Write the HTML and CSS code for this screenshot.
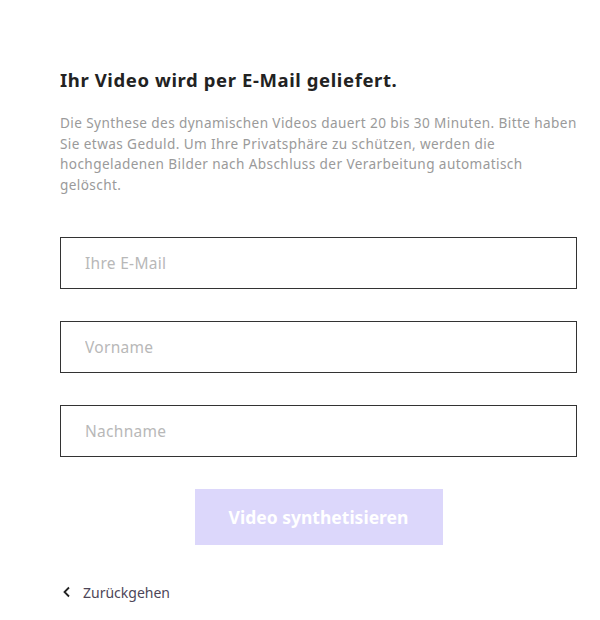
FILE: index.html
```html
<!DOCTYPE html>
<html lang="de">
<head>
    <meta charset="UTF-8">
    <meta name="viewport" content="width=device-width, initial-scale=1.0">
    <title>Video synthetisieren</title>
    <link rel="stylesheet" href="styles.css">
</head>
<body>
    <main class="panel">
        <h1 class="title">Ihr Video wird per E-Mail geliefert.</h1>
        <p class="intro">Die Synthese des dynamischen Videos dauert 20 bis 30 Minuten. Bitte haben Sie etwas Geduld. Um Ihre Privatsphäre zu schützen, werden die hochgeladenen Bilder nach Abschluss der Verarbeitung automatisch gelöscht.</p>

        <form class="form" onsubmit="return false">
            <input type="email" class="field" placeholder="Ihre E-Mail">
            <input type="text" class="field" placeholder="Vorname">
            <input type="text" class="field" placeholder="Nachname">
            <button type="submit" class="submit" disabled>Video synthetisieren</button>
        </form>

        <a href="#" class="back">
            <svg width="10" height="12" viewBox="0 0 10 12"><path d="M7 1.5 2.5 6 7 10.5" fill="none" stroke="#222" stroke-width="1.8"/></svg>
            Zurückgehen
        </a>
    </main>
</body>
</html>
```

FILE: styles.css
```css
body {
    margin: 0;
    padding: 0;
    background: #fff;
    font-family: "Noto Sans", sans-serif;
}

.panel {
    width: 517px;
    padding: 65px 0 0 60px;
}

.title {
    margin: 0;
    font-size: 18.5px;
    font-weight: 700;
    letter-spacing: 0.6px;
    color: #222;
    line-height: 30px;
}

.intro {
    margin: 18px 0 0;
    font-size: 13.6px;
    line-height: 20.7px;
    letter-spacing: 0.4px;
    color: #9a9a9a;
}

.form {
    margin-top: 41px;
    display: flex;
    flex-direction: column;
    gap: 32px;
}

.field {
    box-sizing: border-box;
    width: 100%;
    height: 52px;
    padding: 0 24px;
    border: 1px solid #333;
    border-radius: 0;
    font-family: inherit;
    font-size: 15.5px;
    letter-spacing: 0.3px;
    color: #333;
    outline: none;
}

.field::placeholder {
    color: #b8b8b8;
}

.submit {
    align-self: center;
    width: 248px;
    height: 56px;
    border: none;
    background: #dcd7fb;
    color: #fff;
    font-family: inherit;
    font-size: 17.5px;
    font-weight: 700;
}

.back {
    display: flex;
    align-items: center;
    gap: 11px;
    margin-top: 38px;
    margin-left: 2px;
    font-size: 14px;
    color: #4d4658;
    text-decoration: none;
}
```
